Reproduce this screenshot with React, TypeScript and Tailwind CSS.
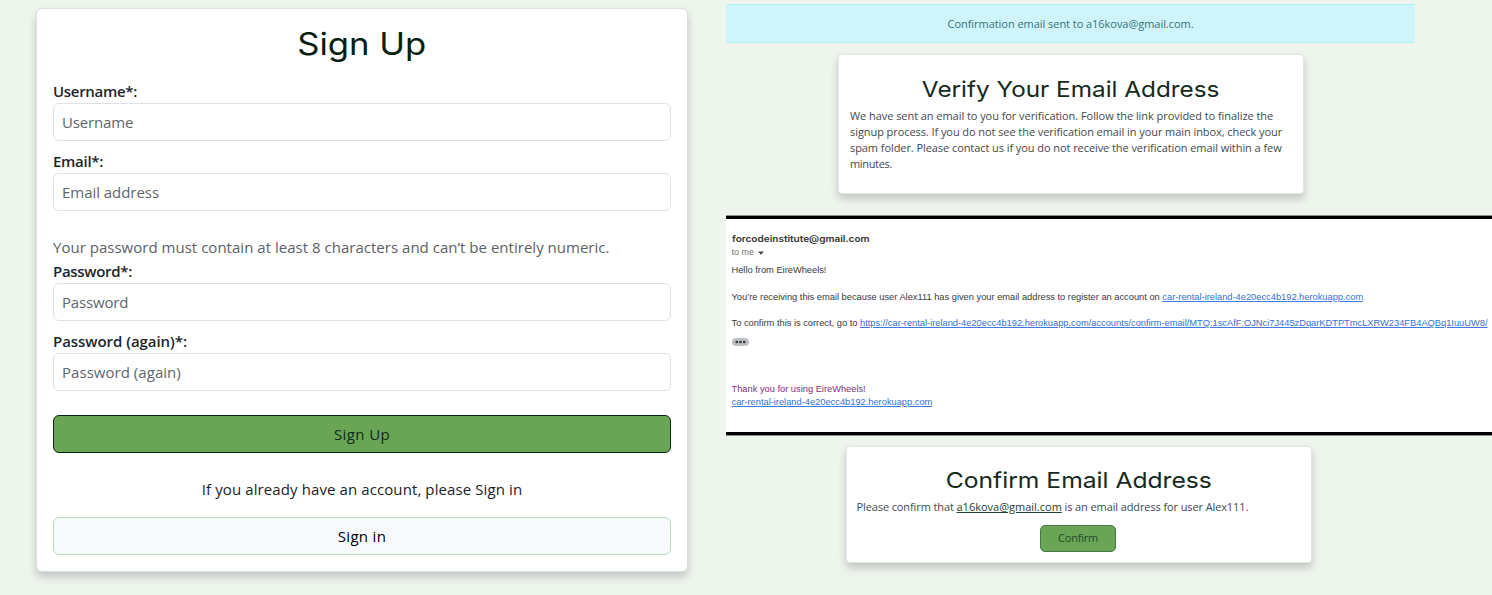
import type { ReactNode } from "react";

const cardShadow = "shadow-[0_5px_9px_rgba(0,0,0,0.19)]";

function Field({ label, labelClass, placeholder, inputClass }: {
  label: string;
  labelClass: string;
  placeholder: string;
  inputClass: string;
}) {
  return (
    <label className="flex flex-col">
      <span className={`h-6 text-[15px] leading-6 font-semibold text-[#212529] ${labelClass}`}>{label}</span>
      <input
        placeholder={placeholder}
        className={`h-[38px] w-full rounded-md border border-[#dee2e6] bg-white px-2 text-[15px] text-[#212529] outline-none placeholder:text-[#5f666d] ${inputClass}`}
      />
    </label>
  );
}

function SignUpCard() {
  return (
    <section className={`mt-2 ml-9 flex h-[564px] w-[652px] shrink-0 flex-col rounded-md border border-[#dadfe2] bg-white px-4 pt-4 ${cardShadow}`}>
      <h1 className="h-[38px] text-center font-['Inter',sans-serif] text-[31px] leading-[38px] text-[#05200f]">
        <span className="inline-block scale-x-[1.117]">Sign Up</span>
      </h1>
      <form className="mt-4 flex flex-col" onSubmit={(e) => e.preventDefault()}>
        <div className="flex flex-col gap-2">
          <Field label="Username*:" labelClass="tracking-[-0.308px]" placeholder="Username" inputClass="tracking-[-0.163px]" />
          <Field label="Email*:" labelClass="tracking-[-0.297px]" placeholder="Email address" inputClass="tracking-[-0.04px]" />
        </div>
        <p className="mt-6 h-6 text-[15px] leading-6 tracking-[0.02px] text-[#5c6167]">
          Your password must contain at least 8 characters and can’t be entirely numeric.
        </p>
        <div className="flex flex-col gap-2">
          <Field label="Password*:" labelClass="tracking-[-0.306px]" placeholder="Password" inputClass="tracking-[-0.16px]" />
          <Field label="Password (again)*:" labelClass="tracking-[-0.049px]" placeholder="Password (again)" inputClass="tracking-[0.04px]" />
        </div>
        <button className="mt-6 h-[38px] rounded-md border border-[#0a2414] bg-[#6aa556] text-[15px] tracking-[0.4px] text-[#0e2c17]">
          Sign Up
        </button>
      </form>
      <p className="mt-6 h-6 text-center text-[15px] leading-6 tracking-[0.1px] text-[#1c2226]">
        If you already have an account, please Sign in
      </p>
      <button className="mt-4 h-[38px] shrink-0 rounded-md border border-[#bfd9b8] bg-[#f8f9fa] text-[15px] tracking-[0.321px] text-black">
        Sign in
      </button>
    </section>
  );
}

function Link({ children }: { children: ReactNode }) {
  return <a className="text-[#3570d8] underline decoration-[#3f7be0] decoration-1 underline-offset-1">{children}</a>;
}

function EmailMessage() {
  return (
    <article className="mt-[21px] flex h-[221px] shrink-0 flex-col border-y border-[#8f8f8f] bg-white font-['Liberation_Sans',Arial,sans-serif] text-[9.3px] leading-[13px] tracking-[-0.005px] whitespace-pre text-[#3a3a3a]">
      <div className="h-[3px] shrink-0 bg-black" />
      <div className="flex flex-1 flex-col items-start pt-[13px] pl-[5.5px]">
        <div className="origin-left scale-x-[1.115] font-['Inter',sans-serif] text-[9px] font-semibold text-[#333]">forcodeinstitute@gmail.com</div>
        <div className="mt-px flex items-center gap-1 text-[9px] text-[#777]">
          to me
          <svg width="6" height="4" viewBox="0 0 6 4"><path d="M0 .5h6L3 3.7z" fill="#444" /></svg>
        </div>
        <p className="mt-[5px]">Hello from EireWheels!</p>
        <p className="mt-[14px]">You’re receiving this email because user Alex111 has given your email address to register an account on <Link>car-rental-ireland-4e20ecc4b192.herokuapp.com</Link><span className="text-[#aaa]">.</span></p>
        <p className="mt-[13px]">To confirm this is correct, go to <Link>https://car-rental-ireland-4e20ecc4b192.herokuapp.com/accounts/confirm-email/MTQ:1scAfF:OJNci7J445zDqarKDTPTmcLXRW234FB4AQBq1IuuUW8/</Link></p>
        <svg className="mt-2" width="17" height="8" viewBox="0 0 17 8">
          <rect width="17" height="8" rx="4" fill="#bcc0c4" />
          <g fill="#34383b">
            <circle cx="4.8" cy="4" r="1.35" />
            <circle cx="8.5" cy="4" r="1.35" />
            <circle cx="12.2" cy="4" r="1.35" />
          </g>
        </svg>
        <p className="mt-[37px] text-[#80307f]">Thank you for using EireWheels!</p>
        <Link>car-rental-ireland-4e20ecc4b192.herokuapp.com</Link>
      </div>
      <div className="h-[3px] shrink-0 bg-black" />
    </article>
  );
}

export default function App() {
  return (
    <main className="flex h-[595px] w-[1492px] overflow-hidden bg-[#eef5ed] font-['Open_Sans',sans-serif]">
      <SignUpCard />
      <div className="ml-[38px] flex w-[766px] shrink-0 flex-col pt-1">
        <div className="h-[39px] w-[689px] shrink-0 border-y border-[#b0eff8] bg-[#cff4fc] text-center text-[11px] leading-[37px] tracking-[-0.043px] text-[#38727c]">
          Confirmation email sent to a16kova@gmail.com.
        </div>
        <section className={`mt-[11px] ml-28 flex h-[140px] w-[466px] shrink-0 flex-col rounded border border-[#e2e7e5] bg-white pt-5 pl-[11px] ${cardShadow}`}>
          <h2 className="mr-3 h-7 text-center font-['Inter',sans-serif] text-[22px] leading-7 text-[#15291d]">
            <span className="inline-block scale-x-[1.105]">Verify Your Email Address</span>
          </h2>
          <div className="mt-[5px] text-[11px] leading-[16.1px] whitespace-nowrap text-[#44494d]">
            <p className="tracking-[-0.055px]">We have sent an email to you for verification. Follow the link provided to finalize the</p>
            <p className="tracking-[-0.07px]">signup process. If you do not see the verification email in your main inbox, check your</p>
            <p className="tracking-[-0.07px]">spam folder. Please contact us if you do not receive the verification email within a few</p>
            <p className="tracking-[-0.336px]">minutes.</p>
          </div>
        </section>
        <EmailMessage />
        <section className={`mt-[9.5px] ml-[119.5px] flex h-[117.5px] w-[466px] shrink-0 flex-col rounded border border-[#e2e7e5] bg-white pt-[19.5px] ${cardShadow}`}>
          <h2 className="h-7 text-center font-['Inter',sans-serif] text-[22px] leading-7 text-[#15291d]">
            <span className="inline-block scale-x-[1.12]">Confirm Email Address</span>
          </h2>
          <p className="mt-[5px] pl-[10px] text-[11px] leading-4 whitespace-nowrap text-[#44494d]">
            <span className="tracking-[-0.109px]">Please confirm that </span>
            <a className="text-[#24432f] underline underline-offset-1">a16kova@gmail.com</a>
            <span className="tracking-[-0.11px]"> is an email address for user Alex111.</span>
          </p>
          <button className="mt-[10px] ml-[193.5px] h-[27px] w-[76px] rounded-[5px] border border-[#47784a] bg-[#6aa556] text-[11px] tracking-[-0.208px] text-[#254a2b]">
            Confirm
          </button>
        </section>
      </div>
    </main>
  );
}
